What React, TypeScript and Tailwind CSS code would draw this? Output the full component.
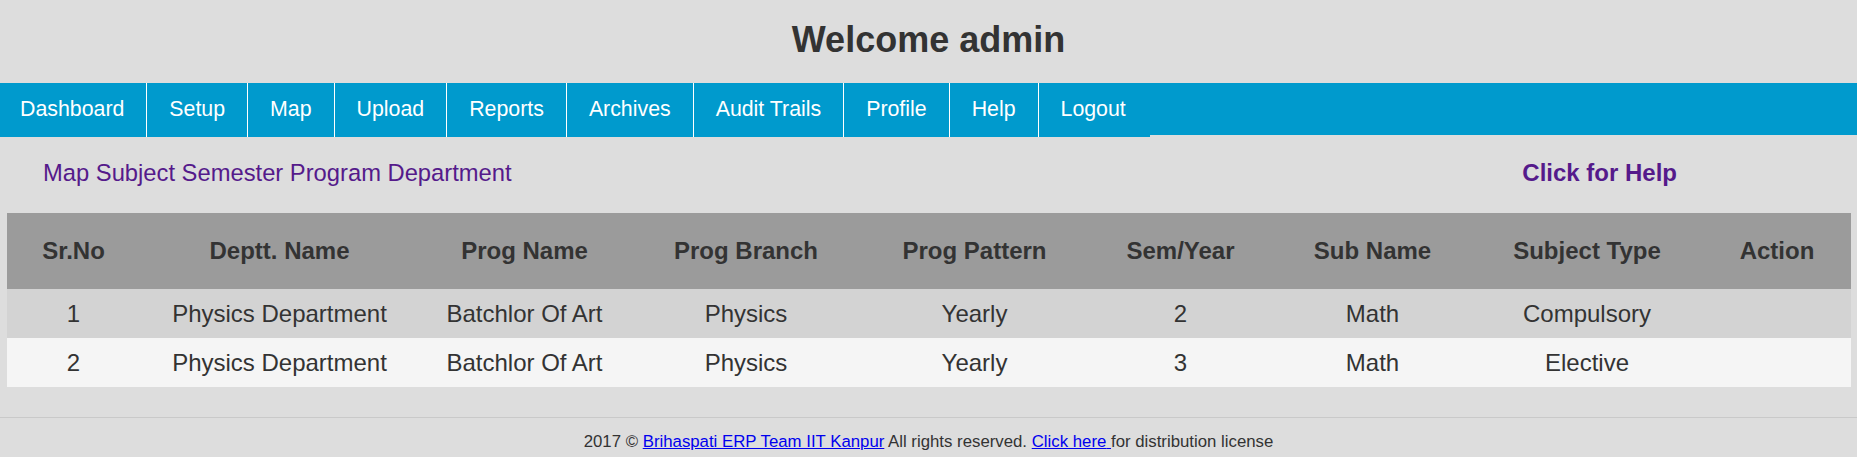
import React from 'react';

const menu = ['Dashboard', 'Setup', 'Map', 'Upload', 'Reports', 'Archives', 'Audit Trails', 'Profile', 'Help', 'Logout'];

const columns = ['Sr.No', 'Deptt. Name', 'Prog Name', 'Prog Branch', 'Prog Pattern', 'Sem/Year', 'Sub Name', 'Subject Type', 'Action'];

const rows = [
  ['1', 'Physics Department', 'Batchlor Of Art', 'Physics', 'Yearly', '2', 'Math', 'Compulsory', ''],
  ['2', 'Physics Department', 'Batchlor Of Art', 'Physics', 'Yearly', '3', 'Math', 'Elective', ''],
];

const gridCols = 'grid grid-cols-[133px_279px_211px_232px_225px_187px_197px_232px_148px]';

export default function App() {
  return (
    <div className="min-h-[457px] bg-[#dddddd] text-[#333333] font-['Liberation_Sans',Arial,sans-serif]">
      {/* Title */}
      <div className="h-[83px] pt-[19px] text-center">
        <h1 className="text-[36px] font-bold leading-[41px]">Welcome admin</h1>
      </div>

      {/* Menu bar */}
      <nav className="h-[52px] bg-[#009acd]">
        <ul className="flex h-[54px] w-max bg-[#009acd]">
          {menu.map((item, i) => (
            <li
              key={item}
              className={`flex items-center text-[21.33px] text-white ${
                i === 0 ? 'pl-[20px] pr-[22px]' : i === menu.length - 1 ? 'pl-[22px] pr-[24px]' : 'px-[22px]'
              } ${i < menu.length - 1 ? 'border-r border-white' : ''}`}
            >
              {item}
            </li>
          ))}
        </ul>
      </nav>

      {/* Page heading */}
      <div className="flex pt-[24px] pb-[26px] pl-[43px] text-[24px] leading-[28px] text-[#551a8b]">
        <span className="text-[23.75px]">Map Subject Semester Program Department</span>
        <span className="ml-auto mr-[180px] font-bold">Click for Help</span>
      </div>

      {/* Table */}
      <div className="ml-[7px] w-[1844px] text-[24px]">
        <div className={`${gridCols} h-[76px] items-center bg-[#9b9b9b] font-bold text-center`}>
          {columns.map((c) => (
            <div key={c}>{c}</div>
          ))}
        </div>
        {rows.map((r, ri) => (
          <div
            key={ri}
            className={`${gridCols} h-[49px] items-center text-center ${
              ri % 2 === 0 ? 'bg-[#d3d3d3]' : 'bg-[#f5f5f5]'
            }`}
          >
            {r.map((cell, ci) => (
              <div key={ci}>{cell}</div>
            ))}
          </div>
        ))}
      </div>

      {/* Footer */}
      <footer className="mt-[30px] border-t border-[#c9c9c9] pt-[14px] text-center text-[16.8px] leading-[19px]">
        2017 ©{' '}
        <a href="#" className="text-[#0000ee] underline">
          Brihaspati ERP Team IIT Kanpur
        </a>{' '}
        All rights reserved.{' '}
        <a href="#" className="text-[#0000ee] underline">
          Click here{' '}
        </a>
        for distribution license
      </footer>
    </div>
  );
}
